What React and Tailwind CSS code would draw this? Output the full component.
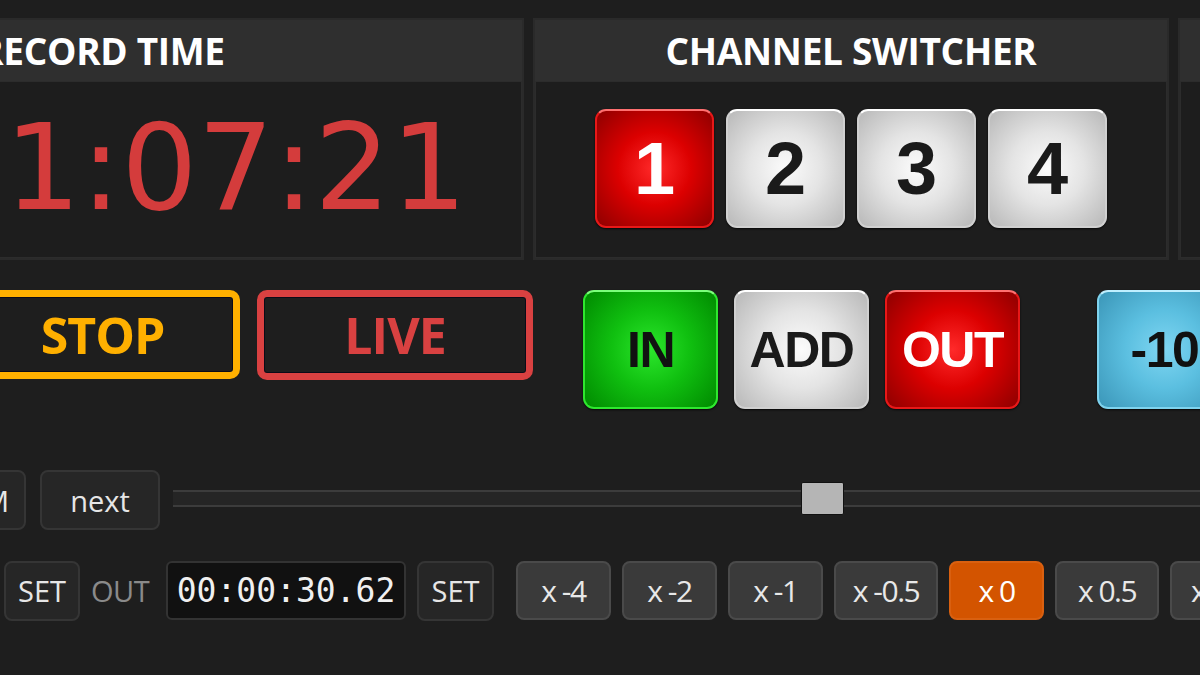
function Panel({ w, title, children }) {
  return (
    <div className={`${w} shrink-0 h-full flex flex-col bg-[#2a2a2a] p-[2px]`}>
      <div className="h-[61px] shrink-0 bg-[#2f2f2f] flex items-center justify-center text-[37px] font-bold leading-none text-white tracking-[-0.3px]">
        {title}
      </div>
      <div className="flex-1 bg-[#1d1d1d] border border-[#2c2c2c]">{children}</div>
    </div>
  );
}

const glossRed =
  "bg-[radial-gradient(circle_at_50%_50%,#ff2a2a_0%,#dc0000_45%,#8e0000_100%)] border-2 border-[#e81818] border-t-[#ff7070] text-white";
const glossGray =
  "bg-[radial-gradient(circle_at_50%_50%,#fbfbfb_0%,#e4e4e4_45%,#b8b8b8_100%)] border-2 border-[#d0d0d0] border-t-[#ffffff] text-[#1a1a1a]";
const glossGreen =
  "bg-[radial-gradient(circle_at_50%_50%,#2ce62c_0%,#10c010_45%,#008a00_100%)] border-2 border-[#2ee82e] border-t-[#7bff7b] text-[#111111]";
const glossBlue =
  "bg-[radial-gradient(circle_at_50%_50%,#7fd6f2_0%,#5bbfe0_45%,#3b96b8_100%)] border-2 border-[#7fd3ee] border-t-[#bfefff] text-[#111111]";

function ChanBtn({ cls, children }) {
  return (
    <div
      className={`${cls} w-[119px] h-[119px] rounded-[11px] flex items-center justify-center font-['Liberation_Sans',Arial,sans-serif] font-bold text-[74px] leading-none shadow-[0_1px_2px_rgba(0,0,0,0.8)]`}
    >
      {children}
    </div>
  );
}

function BigBtn({ cls, m, children }) {
  return (
    <div
      className={`${cls} ${m} shrink-0 w-[135px] h-[119px] rounded-[11px] flex items-center justify-center font-['Liberation_Sans',Arial,sans-serif] font-bold text-[50px] leading-none tracking-[-1.5px] shadow-[0_1px_2px_rgba(0,0,0,0.8)]`}
    >
      {children}
    </div>
  );
}

function DarkBtn({ w, m, children }) {
  return (
    <div
      className={`${w} ${m} shrink-0 h-[60px] rounded-[8px] bg-[#262626] border-2 border-[#353535] flex items-center justify-center text-[29px] text-[#e6e6e6] leading-none`}
    >
      {children}
    </div>
  );
}

function SpeedBtn({ w, active, align, children }) {
  return (
    <div
      className={`${w} ${align || "justify-center"} shrink-0 h-[59px] rounded-[8px] border-2 flex items-center text-[30px] leading-none tracking-[-1.5px] ${
        active
          ? "bg-[#d35400] border-[#d96010] text-white"
          : "bg-[#3a3a3a] border-[#4a4a4a] text-[#e8e8e8]"
      }`}
    >
      {children}
    </div>
  );
}

export default function App() {
  return (
    <div className="w-[1200px] h-[675px] overflow-hidden bg-[#1e1e1e] font-['Open_Sans',sans-serif] text-white">
      {/* Row 1: panels */}
      <div className="flex gap-[9px] mt-[18px] ml-[-320px] h-[242px]">
        <Panel w="w-[844px]" title="RECORD TIME">
          <div className="h-full flex items-center justify-end pr-[54px] pb-[4px]">
            <span className="font-['DejaVu_Sans',Verdana,sans-serif] text-[120px] leading-none text-[#d43c3c]">
              1:07:21
            </span>
          </div>
        </Panel>
        <Panel w="w-[636px]" title="CHANNEL SWITCHER">
          <div className="h-full flex items-center justify-center gap-[12px] pb-[2px]">
            <ChanBtn cls={glossRed}>1</ChanBtn>
            <ChanBtn cls={glossGray}>2</ChanBtn>
            <ChanBtn cls={glossGray}>3</ChanBtn>
            <ChanBtn cls={glossGray}>4</ChanBtn>
          </div>
        </Panel>
        <Panel w="w-[500px]" title="" />
      </div>

      {/* Row 2: STOP / LIVE / IN ADD OUT */}
      <div className="flex items-start mt-[30px] ml-[-35px]">
        <div className="shrink-0 w-[275px] h-[89px] rounded-[10px] border-[7px] border-[#ffb000] shadow-[inset_0_0_0_1px_#0b0b18] flex items-center justify-center text-[#ffb000] text-[50px] font-bold leading-none tracking-[-1px]">
          STOP
        </div>
        <div className="shrink-0 ml-[17px] w-[276px] h-[90px] rounded-[10px] border-[7px] border-[#d94141] shadow-[inset_0_0_0_1px_#0b0b18] flex items-center justify-center text-[#d94141] text-[50px] font-bold leading-none tracking-[-1px]">
          LIVE
        </div>
        <BigBtn cls={glossGreen} m="ml-[50px]">IN</BigBtn>
        <BigBtn cls={glossGray} m="ml-[16px]">ADD</BigBtn>
        <BigBtn cls={glossRed} m="ml-[16px]">OUT</BigBtn>
        <BigBtn cls={glossBlue} m="ml-[77px]">-10</BigBtn>
      </div>

      {/* Row 3: M / next / slider */}
      <div className="flex items-start mt-[61px] ml-[-34px] h-[60px]">
        <DarkBtn w="w-[60px]" m="">M</DarkBtn>
        <DarkBtn w="w-[120px]" m="ml-[14px]">next</DarkBtn>
        <div className="ml-[13px] mt-[20px] flex-1 relative h-[17px] border-y-2 border-[#3c3c3c] bg-[#252525]">
          <div className="absolute left-[628px] top-[-10px] w-[43px] h-[33px] bg-[#b5b5b5] border border-[#111111] rounded-[2px]" />
        </div>
      </div>

      {/* Row 4: SET OUT time SET speeds */}
      <div className="flex items-center mt-[31px] h-[59px]">
        <DarkBtn w="w-[76px]" m="ml-[4px]">SET</DarkBtn>
        <span className="ml-[11px] w-[61px] shrink-0 text-[29px] text-[#8a8a8a] leading-none tracking-[-0.5px]">OUT</span>
        <div className="ml-[14px] shrink-0 w-[240px] h-[59px] rounded-[6px] bg-[#111111] border-2 border-[#333333] flex items-center justify-center font-['DejaVu_Sans_Mono',monospace] text-[33px] text-[#f0f0f0] leading-none">
          00:00:30.62
        </div>
        <DarkBtn w="w-[77px]" m="ml-[11px]">SET</DarkBtn>
        <div className="ml-[22px] flex gap-[11px]">
          <SpeedBtn w="w-[95px]">x -4</SpeedBtn>
          <SpeedBtn w="w-[95px]">x -2</SpeedBtn>
          <SpeedBtn w="w-[95px]">x -1</SpeedBtn>
          <SpeedBtn w="w-[104px]">x -0.5</SpeedBtn>
          <SpeedBtn w="w-[95px]" active>x 0</SpeedBtn>
          <SpeedBtn w="w-[104px]">x 0.5</SpeedBtn>
          <SpeedBtn w="w-[95px]" align="justify-start pl-[19px]">x 1</SpeedBtn>
        </div>
      </div>
    </div>
  );
}
